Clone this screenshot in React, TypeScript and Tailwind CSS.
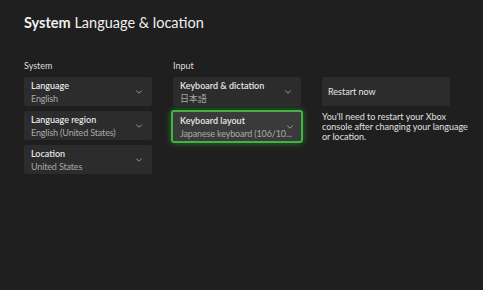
import { ChevronDown } from 'lucide-react'

const systemItems = [
  { label: 'Language', value: 'English' },
  { label: 'Language region', value: 'English (United States)' },
  { label: 'Location', value: 'United States' },
]

const inputItems = [
  { label: 'Keyboard & dictation', value: '日本語', focused: false },
  { label: 'Keyboard layout', value: 'Japanese keyboard (106/10...', focused: true },
]

function Dropdown({ label, value, focused }: { label: string; value: string; focused?: boolean }) {
  return (
    <div
      className={
        focused
          ? 'relative -mx-[2px] flex h-[33px] items-center rounded-[3px] border-2 border-[#3fb43f] bg-[#3a3a3a] pl-[7px] pr-[6px] shadow-[0_0_6px_rgba(60,190,60,0.55)]'
          : 'flex h-[29px] items-center rounded-[2px] bg-[#2c2c2c] pl-[7px] pr-[8px]'
      }
    >
      <div className="flex min-w-0 flex-1 flex-col">
        <span className="text-[9px] font-semibold leading-[11px] text-[#e6e6e6]">{label}</span>
        <span className="mt-[2px] whitespace-nowrap text-[9px] leading-[11px] tracking-[-0.15px] text-[#a8a8a8]">{value}</span>
      </div>
      <ChevronDown size={10} strokeWidth={1.6} className="shrink-0 text-[#cfcfcf]" />
    </div>
  )
}

export default function App() {
  return (
    <div
      className="h-[290px] w-[483px] overflow-hidden bg-[#1f1f1f] pl-[24px] pt-[13px] text-white"
      style={{ fontFamily: 'Lato, "Noto Sans CJK JP", sans-serif' }}
    >
      <h1 className="text-[14.5px] leading-[20px] text-[#f0f0f0]">
        <span className="font-bold">System</span> Language &amp; location
      </h1>

      <div className="mt-[28px] flex gap-[21px]">
        <div className="w-[128px]">
          <div className="mb-[6px] text-[9px] leading-[10px] text-[#dcdcdc]">System</div>
          <div className="flex flex-col gap-[5px]">
            {systemItems.map((item) => (
              <Dropdown key={item.label} label={item.label} value={item.value} />
            ))}
          </div>
        </div>

        <div className="w-[128px]">
          <div className="mb-[6px] text-[9px] leading-[10px] text-[#dcdcdc]">Input</div>
          <div className="flex flex-col gap-[4px]">
            {inputItems.map((item) => (
              <Dropdown key={item.label} label={item.label} value={item.value} focused={item.focused} />
            ))}
          </div>
        </div>

        <div className="w-[128px] pt-[16px]">
          <div className="flex h-[29px] items-center rounded-[2px] bg-[#2c2c2c] pl-[6px] text-[9px] text-[#e6e6e6]">
            Restart now
          </div>
          <p className="mt-[6px] whitespace-nowrap text-[9px] leading-[10px] text-[#e0e0e0]">
            You'll need to restart your Xbox
            <br />
            console after changing your language
            <br />
            or location.
          </p>
        </div>
      </div>
    </div>
  )
}
